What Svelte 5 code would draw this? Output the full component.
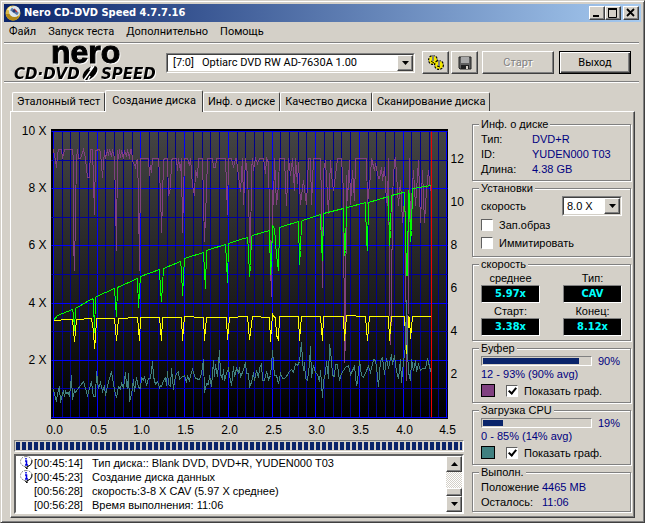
<script>
  let drive = $state('[7:0]   Optiarc DVD RW AD-7630A 1.00');
  let speed = $state('8.0 X');
  let burnImage = $state(false);
  let simulate = $state(false);
  let showBuffer = $state(true);
  let showCpu = $state(true);
  let activeTab = $state(1);

  const menu = ['Файл', 'Запуск теста', 'Дополнительно', 'Помощь'];
  const tabs = ['Эталонный тест', 'Создание диска', 'Инф. о диске', 'Качество диска', 'Сканирование диска'];

  const log = [
    { icon: true, time: '[00:45:14]', text: 'Тип диска:: Blank DVD, DVD+R, YUDEN000 T03' },
    { icon: true, time: '[00:45:23]', text: 'Создание диска данных' },
    { icon: false, time: '[00:56:28]', text: 'скорость:3-8 X CAV (5.97 X среднее)' },
    { icon: false, time: '[00:56:28]', text: 'Время выполнения: 11:06' }
  ];

  // chart scales
  const xAt = (v) => Math.round(53 + v * 87.4);
  const yAt = (v) => Math.round(417 - v * 28.6);
  const gridX = Array.from({ length: 46 }, (_, i) => i);
  const gridY = Array.from({ length: 11 }, (_, i) => i);
  const leftLabels = [2, 4, 6, 8, 10];
  const rightLabels = [2, 4, 6, 8, 10, 12];
  const bottomLabels = [0, 0.5, 1, 1.5, 2, 2.5, 3, 3.5, 4, 4.5];

  const bufferLine = '53,149 54,155 55,160 56,167 57,155 58,149 61,149 62,158 64,149 72,149 73,160 73,240 74,270 75,213 76,158 77,149 78,158 80,158 83,149 85,158 86,168 87,177 89,177 90,149 92,149 93,180 94,214 95,150 99,149 100,152 102,177 104,150 105,158 107,149 108,155 109,149 111,156 112,149 114,158 115,200 116,250 117,150 118,158 119,149 120,157 121,150 123,158 124,150 126,156 127,149 129,158 130,149 131,149 132,160 135,167 136,160 137,159 138,195 139,270 140,158 148,158 149,175 150,165 151,172 152,158 158,158 160,190 161,232 162,200 163,160 164,158 167,158 168,195 170,188 171,160 172,158 176,158 177,170 178,158 180,170 181,158 182,232 183,195 184,158 187,158 189,165 190,158 192,185 194,195 195,170 197,177 198,158 202,158 204,241 206,190 207,158 212,158 213,167 215,167 216,158 225,158 226,185 227,214 228,158 231,158 233,167 235,158 236,158 237,168 240,191 242,158 243,204 245,158 247,175 249,230 250,255 251,170 252,158 253,170 255,158 257,163 259,158 263,158 265,173 266,158 268,162 270,265 271,296 272,190 273,204 274,158 276,204 278,185 279,158 284,158 286,205 288,158 290,175 292,158 294,190 295,158 297,183 298,162 300,204 303,180 306,204 308,158 310,158 311,204 313,158 320,158 321,200 322,287 323,170 325,160 328,213 330,160 331,175 333,190 335,175 337,158 341,158 343,190 344,362 345,340 346,175 347,200 349,160 350,204 352,170 354,200 355,158 366,158 367,203 370,175 371,158 374,170 375,163 378,178 379,178 381,167 382,180 384,167 386,200 387,205 388,158 389,287 390,344 391,308 392,195 394,160 395,158 398,205 400,180 402,222 404,200 405,220 406,380 407,340 408,290 409,158 410,240 411,200 413,170 415,205 418,160 420,222 422,170 424,222 426,190 428,170 430,190 431,180';

  const speedLine = '53,320 57,315 72,309 73,313 74,330 75,308 92,298 93,300 94,332 95,297 96,296 114,288 115,302 116,316 117,287 137,278 138,307 139,290 140,276 159,269 160,290 161,301 163,268 180,261 181,270 182,295 184,258 203,252 204,270 205,288 206,250 225,244 226,260 227,282 228,243 240,239 247,237 248,250 249,276 250,265 251,236 252,235 269,230 270,274 271,260 272,225 274,228 276,255 278,270 279,227 298,221 299,264 300,250 301,221 302,220 320,214 321,245 322,260 323,213 343,208 344,255 345,250 346,206 347,207 365,202 366,240 367,250 368,202 388,196 389,245 390,230 391,195 403,192 404,192 405,230 406,275 407,275 408,190 409,195 410,241 411,230 412,188 431,185';

  const rotationLine = '53,320 60,320 61,319 72,319 74,341 76,319 91,318 93,330 94,348 95,338 96,318 114,318 116,340 118,318 137,317 139,340 140,317 159,317 161,340 162,317 181,317 182,340 184,316 203,317 204,340 206,317 226,317 227,339 229,317 247,316 249,339 252,316 269,317 270,341 272,314 273,316 275,317 276,335 278,339 279,316 298,316 299,340 301,316 320,316 322,340 323,316 343,316 344,340 346,315 365,316 367,340 369,316 388,316 389,340 391,316 404,316 405,335 406,353 407,340 408,316 409,317 410,338 412,316 431,316';

  const cpuLine = '53,389 55,398 56,401 57,393 59,386 60,402 61,397 63,390 64,396 65,391 66,393 68,392 69,396 70,386 71,375 72,399 74,390 75,392 77,389 80,385 83,381 85,388 87,395 89,388 91,381 92,390 93,396 95,396 96,371 97,380 98,388 100,382 102,391 104,385 105,395 107,385 109,378 111,371 113,384 115,394 116,397 118,386 120,389 121,383 123,387 125,372 126,385 127,388 128,373 129,401 131,394 133,379 134,391 136,377 138,387 140,388 141,377 143,380 144,376 146,385 148,378 150,378 151,370 152,361 153,376 155,384 157,381 159,387 160,385 161,386 163,380 165,377 166,385 167,371 168,384 170,386 171,368 173,389 174,380 176,373 178,371 179,379 181,377 184,375 186,382 187,376 189,380 190,375 192,369 195,378 199,379 201,373 203,359 204,392 206,383 208,384 209,375 211,386 212,373 213,360 214,376 215,364 217,376 219,350 220,374 222,378 223,369 224,380 226,373 228,368 230,380 231,385 233,366 234,376 236,368 238,372 239,367 240,377 243,369 245,362 246,373 248,373 249,386 251,382 253,372 254,380 256,370 258,377 259,368 261,363 262,380 264,380 266,371 268,379 270,375 271,365 272,350 273,363 274,375 276,375 278,383 280,373 282,378 284,378 286,376 289,371 291,369 293,372 295,363 297,365 299,361 301,342 302,361 303,370 304,362 305,378 307,380 309,363 310,346 311,377 313,365 315,372 317,374 319,381 320,370 322,397 323,380 325,373 326,361 328,378 329,344 331,359 332,375 334,376 335,364 337,364 339,380 341,373 343,370 345,367 348,365 350,374 352,370 354,366 356,385 357,381 359,360 361,375 363,377 366,370 368,366 370,372 373,359 375,360 376,367 378,386 380,360 382,357 384,374 386,358 388,368 391,354 392,364 394,355 396,371 398,378 400,359 401,382 403,362 405,345 406,300 407,350 408,372 410,380 411,359 413,370 415,360 416,371 418,364 420,370 422,368 425,368 427,358 429,366 430,370 431,368';
</script>

<main class="window">
  <header class="titlebar">
    <svg class="app-icon" viewBox="0 0 16 16" aria-hidden="true">
      <circle cx="8" cy="8" r="7.500" fill="#d8b848" />
      <path d="M1 9a7 7 0 0 0 13 3L9 9z" fill="#b08818" />
      <path d="M2 5a7 7 0 0 1 4-4l2 5z" fill="#fff3b0" />
      <circle cx="9.500" cy="6.500" r="5.500" fill="#dce6ee" />
      <path d="M6 4l7 5" stroke="#5a7ca8" stroke-width="3" />
      <path d="M9 4l3 3" stroke="#c03030" stroke-width="1.500" />
      <circle cx="9" cy="6" r="1.500" fill="#223c78" />
    </svg>
    <h1>Nero CD-DVD Speed 4.7.7.16</h1>
    <div class="window-buttons">
      <button aria-label="Свернуть"><svg viewBox="0 0 12 10"><path d="M2 8h6" stroke="#000" stroke-width="2" /></svg></button>
      <button aria-label="Развернуть"><svg viewBox="0 0 12 10"><path d="M1.500 1v8.500h8V1M1 1h9" fill="none" stroke="#000" /><path d="M1 1h9" stroke="#000" stroke-width="2" /></svg></button>
      <button class="close" aria-label="Закрыть"><svg viewBox="0 0 12 10"><path d="M2 1l7 7M9 1L2 8" stroke="#000" stroke-width="1.800" /></svg></button>
    </div>
  </header>

  <nav class="menu">
    {#each menu as item}
      <button>{item}</button>
    {/each}
  </nav>

  <div class="toolbar">
    <svg class="logo" viewBox="0 0 148 38" role="img" aria-label="nero CD-DVD SPEED">
      <text x="37" y="19" class="nero">nero</text>
      <text x="0" y="35" class="speed">CD·DVD</text>
      <ellipse cx="76" cy="29" rx="9" ry="5" transform="rotate(-42 76 29)" />
      <path d="M70 36l10-14M74 36l2-4M76 26l2-4" stroke="#fff" stroke-width="1.500" />
      <text x="87" y="35" class="speed">SPEED</text>
    </svg>
    <div class="combo drive">
      <select bind:value={drive} aria-label="Привод">
        <option value={drive}>[7:0] &nbsp; Optiarc DVD RW AD-7630A 1.00</option>
      </select>
      <span class="arrow"><svg viewBox="0 0 7 4"><path d="M0 0h7L3.500 4z" /></svg></span>
    </div>
    <div class="tools">
      <button class="tool" aria-label="Настройки">
        <svg viewBox="0 0 18 16" fill="#f4e800">
          <circle cx="6" cy="5" r="4" stroke="#000" stroke-width="2" stroke-dasharray="2 1" />
          <circle cx="6" cy="5" r="3.800" />
          <path d="M5 0h2v6H5z" fill="#808080" />
          <circle cx="12" cy="10" r="4" stroke="#000" stroke-width="2" stroke-dasharray="2 1" />
          <circle cx="12" cy="10" r="3.800" />
          <path d="M11 5h2v6h-2z" fill="#808080" />
          <path d="M4 6l3 2M10 11l3 1" stroke="#000" />
        </svg>
      </button>
      <button class="tool" aria-label="Сохранить">
        <svg viewBox="0 0 18 16">
          <path d="M3 2h12v12H4l-1-1z" fill="#606060" stroke="#202020" />
          <path d="M5 2h8v6H5z" fill="#a8a8a8" />
          <path d="M5 10h8v4H5z" fill="#202020" />
          <path d="M10 11h2v3h-2z" fill="#d4d0c8" />
        </svg>
      </button>
    </div>
    <button class="push" disabled>Старт</button>
    <button class="push default">Выход</button>
  </div>

  <div class="tabs" role="tablist">
    {#each tabs as tab, i}
      <button role="tab" aria-selected={activeTab === i} class:active={activeTab === i} onclick={() => (activeTab = i)}>{tab}</button>
    {/each}
  </div>

  <section class="page">
    <div class="left">
      <svg class="chart" viewBox="13.500 117.500 450 320">
        <defs>
          <linearGradient id="plot" x1="0" y1="0" x2="0" y2="1">
            <stop offset="0" stop-color="#444" />
            <stop offset="1" stop-color="#000" />
          </linearGradient>
        </defs>
        <rect x="50.500" y="128.500" width="397" height="290" fill="#000" />
        <rect x="52.500" y="130.500" width="394" height="287" fill="url(#plot)" />
        {#each gridX as i}
          <line x1={xAt(i / 10)} x2={xAt(i / 10)} y1="131" y2="417" stroke={i % 5 ? '#00008c' : '#0000ff'} />
        {/each}
        {#each gridY as v}
          <line x1="51" x2="447" y1={yAt(v)} y2={yAt(v)} stroke={v % 2 ? '#0000a0' : '#0000ff'} />
        {/each}
        <g class="series">
          {#if showBuffer}
            <polyline points={bufferLine} stroke="#804080" />
          {/if}
          <polyline points={speedLine} stroke="#00ff00" />
          <polyline points={rotationLine} stroke="#ffff00" />
          {#if showCpu}
            <polyline points={cpuLine} stroke="#408080" />
          {/if}
        </g>
        <line x1="431" x2="431" y1="131" y2="417" stroke="#f00000" />
        <g class="axis">
          {#each leftLabels as v}
            <text x="46" y={yAt(v) + 3} text-anchor="end">{v} X</text>
          {/each}
          {#each rightLabels as v}
            <text x="450" y={Math.round(420 - v * 21.5)}>{v}</text>
          {/each}
          {#each bottomLabels as v}
            <text x={xAt(v) + 1} y="433" text-anchor="middle">{v.toFixed(1)}</text>
          {/each}
        </g>
      </svg>

      <div class="blocks" role="progressbar" aria-label="Выполнение" aria-valuenow="100"><div></div></div>

      <div class="log">
        <ul>
          {#each log as row}
            <li>
              <span class="mark">
                {#if row.icon}
                  <svg viewBox="0 0 13 13" aria-hidden="true">
                    <path d="M6 .5c-3 0-5.500 2-5.500 5s2 4.500 4.500 5l2 2.500V10.500c3 0 5-2 5-5S9.500.5 6 .5z" fill="#fff" stroke="#888" stroke-dasharray="2 1" />
                    <path d="M12 4c0 4-2 6-5 6.500V13l-2-2.500" fill="none" stroke="#000" />
                    <path d="M6 2v1.500M5 5h1.500v4M5 9h3" stroke="#0000e0" stroke-width="1.500" fill="none" />
                  </svg>
                {/if}
              </span>
              <span class="time">{row.time}</span>
              <span>{row.text}</span>
            </li>
          {/each}
        </ul>
        <div class="scrollbar">
          <button aria-label="Вверх"><svg viewBox="0 0 7 4"><path d="M0 4h7L3.500 0z" /></svg></button>
          <div class="thumb"></div>
          <button aria-label="Вниз"><svg viewBox="0 0 7 4"><path d="M0 0h7L3.500 4z" /></svg></button>
        </div>
      </div>
    </div>

    <aside>
      <fieldset class="info">
        <legend>Инф. о диске</legend>
        <dl>
          <dt>Тип:</dt><dd>DVD+R</dd>
          <dt>ID:</dt><dd>YUDEN000 T03</dd>
          <dt>Длина:</dt><dd>4.38 GB</dd>
        </dl>
      </fieldset>

      <fieldset class="settings">
        <legend>Установки</legend>
        <div class="speed-row">
          <label for="speed">скорость</label>
          <div class="combo">
            <select id="speed" bind:value={speed}>
              <option>8.0 X</option>
            </select>
            <span class="arrow"><svg viewBox="0 0 7 4"><path d="M0 0h7L3.500 4z" /></svg></span>
          </div>
        </div>
        <label class="check"><input type="checkbox" bind:checked={burnImage} />Зап.образ</label>
        <label class="check"><input type="checkbox" bind:checked={simulate} />Иммитировать</label>
      </fieldset>

      <fieldset class="speeds">
        <legend>скорость</legend>
        <div class="readouts">
          <div><span>среднее</span><output>5.97x</output></div>
          <div><span>Тип:</span><output>CAV</output></div>
          <div><span>Старт:</span><output>3.38x</output></div>
          <div><span>Конец:</span><output>8.12x</output></div>
        </div>
      </fieldset>

      <fieldset class="usage">
        <legend>Буфер</legend>
        <div class="meter"><div class="bar"><div style="width: 90%"></div></div><span>90%</span></div>
        <p>12 - 93% (90% avg)</p>
        <div class="show">
          <i class="swatch purple"></i>
          <label class="check"><input type="checkbox" bind:checked={showBuffer} />Показать граф.</label>
        </div>
      </fieldset>

      <fieldset class="usage">
        <legend>Загрузка CPU</legend>
        <div class="meter"><div class="bar"><div style="width: 19%"></div></div><span>19%</span></div>
        <p>0 - 85% (14% avg)</p>
        <div class="show">
          <i class="swatch teal"></i>
          <label class="check"><input type="checkbox" bind:checked={showCpu} />Показать граф.</label>
        </div>
      </fieldset>

      <fieldset class="progress">
        <legend>Выполн.</legend>
        <dl>
          <dt>Положение</dt><dd>4465 MB</dd>
          <dt>Осталось:</dt><dd>11:06</dd>
        </dl>
      </fieldset>
    </aside>
  </section>
</main>

<style>
  :global(body) {
    margin: 0;
    background: #d4d0c8;
  }
  * {
    box-sizing: border-box;
  }
  .window {
    display: flex;
    flex-direction: column;
    min-height: 100vh;
    padding: 2px;
    border: 1px solid;
    border-color: #d4d0c8 #404040 #404040 #d4d0c8;
    box-shadow: inset 1px 1px 0 #fff, inset -1px -1px 0 #808080;
    background: #d4d0c8;
    color: #000;
    font: 11px/14px "Liberation Sans", Arial, sans-serif;
  }
  button,
  select,
  input {
    margin: 0;
    padding: 0;
    border: 0;
    border-radius: 0;
    color: inherit;
    font: inherit;
  }
  .titlebar {
    display: flex;
    align-items: center;
    gap: 3px;
    height: 18px;
    margin: 1px 1px 0;
    padding: 0 2px 0 1px;
    background: linear-gradient(to right, #0a246a, #a6caf0);
  }
  .app-icon {
    width: 16px;
    height: 16px;
  }
  h1 {
    flex: 1;
    margin: 0;
    color: #fff;
    font: bold 11px/18px "DejaVu Sans Condensed", Tahoma, sans-serif;
  }
  .window-buttons {
    display: flex;
  }
  .window-buttons button,
  .arrow,
  .scrollbar button,
  .thumb,
  .tool,
  .push {
    border: 1px solid;
    border-color: #fff #404040 #404040 #fff;
    box-shadow: inset -1px -1px 0 #808080;
    background: #d4d0c8;
  }
  .window-buttons button {
    width: 16px;
    height: 14px;
  }
  .window-buttons .close {
    margin-left: 2px;
  }
  .window-buttons svg {
    display: block;
    width: 12px;
    height: 10px;
    margin: 0 1px;
  }
  .menu {
    display: flex;
    gap: 12px;
    height: 21px;
    margin: 0 3px 0 1px;
    padding: 0 5px;
    border-bottom: 1px solid #808080;
    box-shadow: 0 1px 0 #fff;
    font: 11px/20px Roboto, Tahoma, sans-serif;
  }
  .menu button {
    background: none;
  }
  .toolbar {
    display: flex;
    align-items: center;
    height: 39px;
    margin: 0 3px 0 1px;
    padding: 1px 8px 0 10px;
    border-bottom: 1px solid #808080;
    box-shadow: 0 1px 0 #fff;
    font-family: Roboto, Tahoma, sans-serif;
  }
  .logo {
    width: 148px;
    height: 38px;
    overflow: visible;
    filter: drop-shadow(1px 1px 0 #fff);
  }
  .nero {
    font: bold 32px "Liberation Sans", Arial, sans-serif;
    stroke: #000;
    stroke-width: 1px;
  }
  .speed {
    font: italic bold 15px "DejaVu Sans", sans-serif;
  }
  .combo {
    position: relative;
    border: 1px solid;
    border-color: #808080 #fff #fff #808080;
    background: #fff;
  }
  .combo select {
    display: block;
    width: 100%;
    height: 18px;
    padding: 0 18px 0 3px;
    border: 1px solid;
    border-color: #404040 #d4d0c8 #d4d0c8 #404040;
    appearance: none;
    background: #fff;
  }
  .arrow {
    position: absolute;
    top: 1px;
    right: 1px;
    bottom: 1px;
    display: grid;
    place-items: center;
    width: 16px;
    pointer-events: none;
  }
  .arrow svg,
  .scrollbar svg {
    display: block;
    width: 7px;
    height: 4px;
  }
  .drive {
    flex: 1;
    margin: 0 7px 0 4px;
  }
  .drive select {
    padding-left: 5px;
  }
  .tools {
    display: flex;
    gap: 2px;
    margin-right: 4px;
  }
  .tool {
    display: grid;
    place-items: center;
    width: 27px;
    height: 23px;
  }
  .tool svg {
    width: 18px;
    height: 16px;
  }
  .push {
    width: 72px;
    height: 23px;
  }
  .push:disabled {
    color: #808080;
    text-shadow: 1px 1px 0 #fff;
  }
  .push.default {
    margin-left: 5px;
    border-color: #000;
    box-shadow: inset 1px 1px 0 #fff, inset -1px -1px 0 #404040, inset -2px -2px 0 #808080;
  }
  .tabs {
    display: flex;
    align-items: flex-end;
    height: 29px;
    padding-left: 9px;
    font-family: Roboto, Tahoma, sans-serif;
  }
  .tabs button {
    height: 19px;
    padding: 0 4px;
    border: 1px solid;
    border-color: #fff #404040 transparent #fff;
    border-bottom: 0;
    border-radius: 2px 2px 0 0;
    background: #d4d0c8;
    white-space: nowrap;
  }
  .tabs .active {
    z-index: 1;
    height: 22px;
    margin-bottom: -1px;
    padding: 0 6px 2px;
  }
  .page {
    display: flex;
    flex: 1;
    gap: 8px;
    margin: 0 7px 2px;
    padding: 6px 3px 2px;
    border: 1px solid;
    border-color: #fff #404040 #404040 #fff;
    box-shadow: inset -1px -1px 0 #808080;
  }
  .left {
    display: flex;
    flex: 1;
    flex-direction: column;
    gap: 2px;
    min-width: 0;
  }
  .chart {
    display: block;
    width: 100%;
  }
  .series {
    fill: none;
    shape-rendering: crispEdges;
  }
  .axis {
    font-size: 12px;
  }
  .blocks {
    height: 12px;
    padding: 1px;
    border: 1px solid;
    border-color: #808080 #fff #fff #808080;
  }
  .blocks div {
    height: 100%;
    background: repeating-linear-gradient(to right, #0a246a 0 4px, #d4d0c8 4px 6px);
  }
  .log {
    display: flex;
    border: 2px solid;
    border-color: #606060 #fff #fff #606060;
    background: #fff;
  }
  .log ul {
    flex: 1;
    margin: 0;
    padding: 0 0 0 4px;
    list-style: none;
  }
  .log li {
    display: flex;
    white-space: nowrap;
  }
  .mark {
    width: 14px;
  }
  .mark svg {
    display: block;
    width: 13px;
    height: 13px;
  }
  .time {
    width: 58px;
  }
  .scrollbar {
    display: flex;
    flex-direction: column;
    width: 16px;
    background: repeating-conic-gradient(#fff 0 25%, #d4d0c8 0 50%) 0 0 / 2px 2px;
  }
  .scrollbar button {
    display: grid;
    place-items: center;
    height: 16px;
  }
  .thumb {
    height: 8px;
    margin-top: auto;
  }
  aside {
    display: flex;
    flex-direction: column;
    gap: 1px;
    width: 159px;
  }
  fieldset {
    min-width: 0;
    margin: 0;
    padding: 1px 8px 4px;
    border: 1px solid #808080;
    box-shadow: inset 1px 1px 0 #fff, 1px 1px 0 #fff;
  }
  legend {
    margin-left: -2px;
    padding: 0 2px;
    background: #d4d0c8;
    line-height: 12px;
  }
  dl {
    display: grid;
    grid-template-columns: 51px 1fr;
    margin: 0;
    padding-top: 1px;
    line-height: 15px;
  }
  dd {
    margin: 0;
    color: #000080;
  }
  .info,
  .usage {
    padding-bottom: 3px;
  }
  .progress {
    padding-bottom: 1px;
  }
  .progress dl {
    grid-template-columns: 61px 1fr;
  }
  .speed-row {
    display: flex;
    align-items: center;
    justify-content: space-between;
    height: 21px;
  }
  .speed-row .combo {
    width: 60px;
  }
  .check {
    display: flex;
    align-items: center;
    gap: 6px;
    height: 18px;
    white-space: nowrap;
  }
  .check input {
    display: grid;
    place-items: center;
    width: 12px;
    height: 12px;
    border: 1px solid;
    border-color: #606060 #fff #fff #606060;
    appearance: none;
    background: #fff;
  }
  .check input:checked::after {
    width: 3px;
    height: 6px;
    margin-bottom: 2px;
    border: solid #000;
    border-width: 0 2px 2px 0;
    content: '';
    transform: rotate(40deg);
  }
  .readouts {
    display: grid;
    grid-template-columns: 59px 59px;
    justify-content: space-between;
    row-gap: 1px;
  }
  .readouts span,
  .readouts output {
    display: block;
    text-align: center;
  }
  .readouts output {
    height: 18px;
    border: 1px solid;
    border-color: #808080 #fff #fff #808080;
    background: #000;
    color: #00ffff;
    font: bold 11px/15px "DejaVu Sans Condensed", "DejaVu Sans", sans-serif;
  }
  .meter {
    display: flex;
    align-items: center;
    gap: 6px;
    height: 12px;
    color: #000080;
  }
  .bar {
    width: 111px;
    height: 10px;
    padding: 1px;
    border: 1px solid;
    border-color: #808080 #fff #fff #808080;
  }
  .bar div {
    height: 100%;
    background: #0a246a;
  }
  .usage p {
    margin: 0;
    color: #000080;
    line-height: 15px;
  }
  .show {
    display: flex;
    align-items: center;
    gap: 11px;
  }
  .show .check {
    height: 17px;
  }
  .swatch {
    width: 14px;
    height: 13px;
    border: 1px solid #000;
  }
  .purple {
    background: #804080;
  }
  .teal {
    background: #408080;
  }
</style>
